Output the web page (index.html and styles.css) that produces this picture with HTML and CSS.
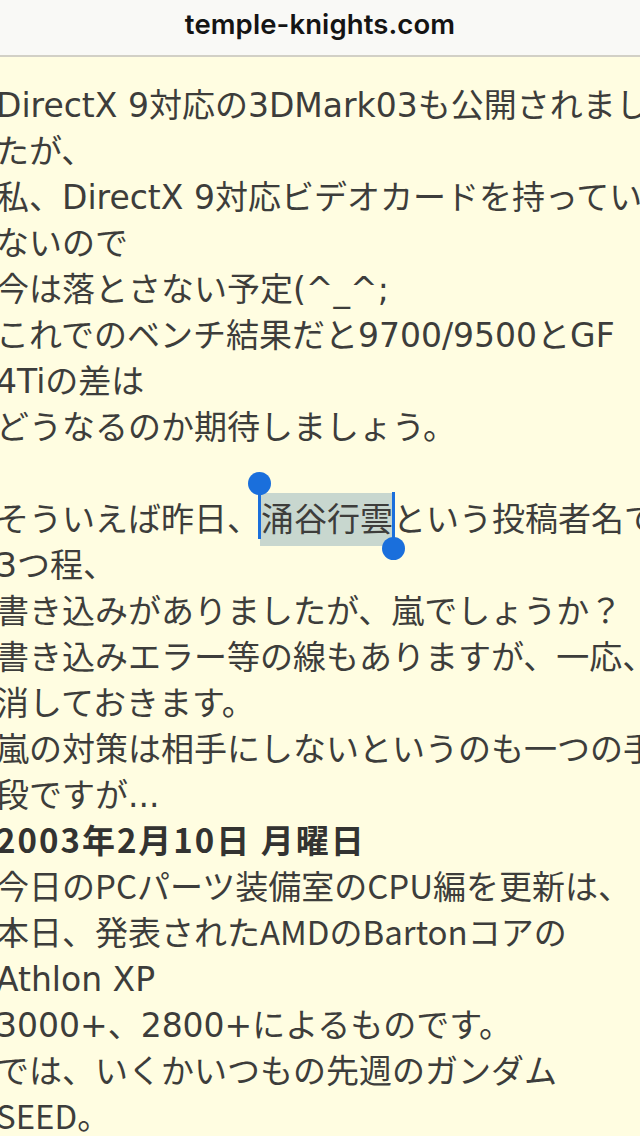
FILE: index.html
```html
<!DOCTYPE html>
<html lang="ja">
<head>
<meta charset="utf-8">
<title>temple-knights.com</title>
<link rel="stylesheet" href="styles.css">
</head>
<body>
<header class="bar"><span class="host">temple-knights.com</span></header>
<main class="page">
<div class="text">DirectX 9対応の3DMark03も公開されまし<br>
たが、<br>
私、DirectX 9対応ビデオカードを持ってい<br>
ないので<br>
今は落とさない予定(^_^;<br>
これでのベンチ結果だと9700/9500とGF<br>
4Tiの差は<br>
どうなるのか期待しましょう。<br>
<br>
そういえば昨日、<span class="sel">涌谷行雲<span class="knob knob-start"></span><span class="knob knob-end"></span></span>という投稿者名で<br>
3つ程、<br>
書き込みがありましたが、嵐でしょうか？<br>
書き込みエラー等の線もありますが、一応、<br>
消しておきます。<br>
嵐の対策は相手にしないというのも一つの手<br>
段ですが...<br>
<b class="date">2003年2月10日 月曜日</b><br>
<span class="alt">今日のPCパーツ装備室のCPU編を更新は、</span><br>
<span class="alt">本日、発表されたAMDのBartonコアの</span><br>
Athlon XP<br>
3000+、2800+によるものです。<br>
では、いくかいつもの先週のガンダム<br>
<span class="alt">SEED。</span></div>
</main>
</body>
</html>
```
FILE: styles.css
```css
html, body {
  margin: 0;
  padding: 0;
  background: #fffde1;
  width: 640px;
  height: 1136px;
  overflow: hidden;
}
.bar {
  height: 57px;
  box-sizing: border-box;
  padding-bottom: 7px;
  background: #f9f9f6;
  border-bottom: 2px solid #d2d0c6;
  display: flex;
  align-items: center;
  justify-content: center;
}
.host {
  font-family: Inter, "Liberation Sans", sans-serif;
  font-size: 27.5px;
  font-weight: 600;
  color: #141414;
  letter-spacing: 0.1px;
}
.page {
  padding-top: 26px;
  overflow: hidden;
}
.text {
  margin-left: -4px;
  white-space: nowrap;
  font-family: "DejaVu Sans", "Noto Sans CJK JP", sans-serif;
  font-size: 33px;
  line-height: 46px;
  color: #3d3d3b;
}
.date {
  font-family: "Noto Sans CJK JP", sans-serif;
  font-weight: 700;
  color: #333331;
  letter-spacing: 2px;
  line-height: 1;
}
.alt {
  font-family: "Noto Sans CJK JP", sans-serif;
  line-height: 1;
}
.sel {
  position: relative;
  background: #c8d7cf;
  padding: 7px 0 7px 1px;
  line-height: 1;
}
.knob {
  position: absolute;
  width: 3px;
  background: #1a6fdc;
}
.knob::after {
  content: "";
  position: absolute;
  left: -10px;
  width: 23px;
  height: 23px;
  border-radius: 50%;
  background: #1a6fdc;
}
.knob-start {
  left: -2px;
  top: -10px;
  height: 56px;
}
.knob-start::after {
  top: -11px;
}
.knob-end {
  right: -2px;
  top: -1px;
  height: 57px;
}
.knob-end::after {
  bottom: -11px;
}
```
